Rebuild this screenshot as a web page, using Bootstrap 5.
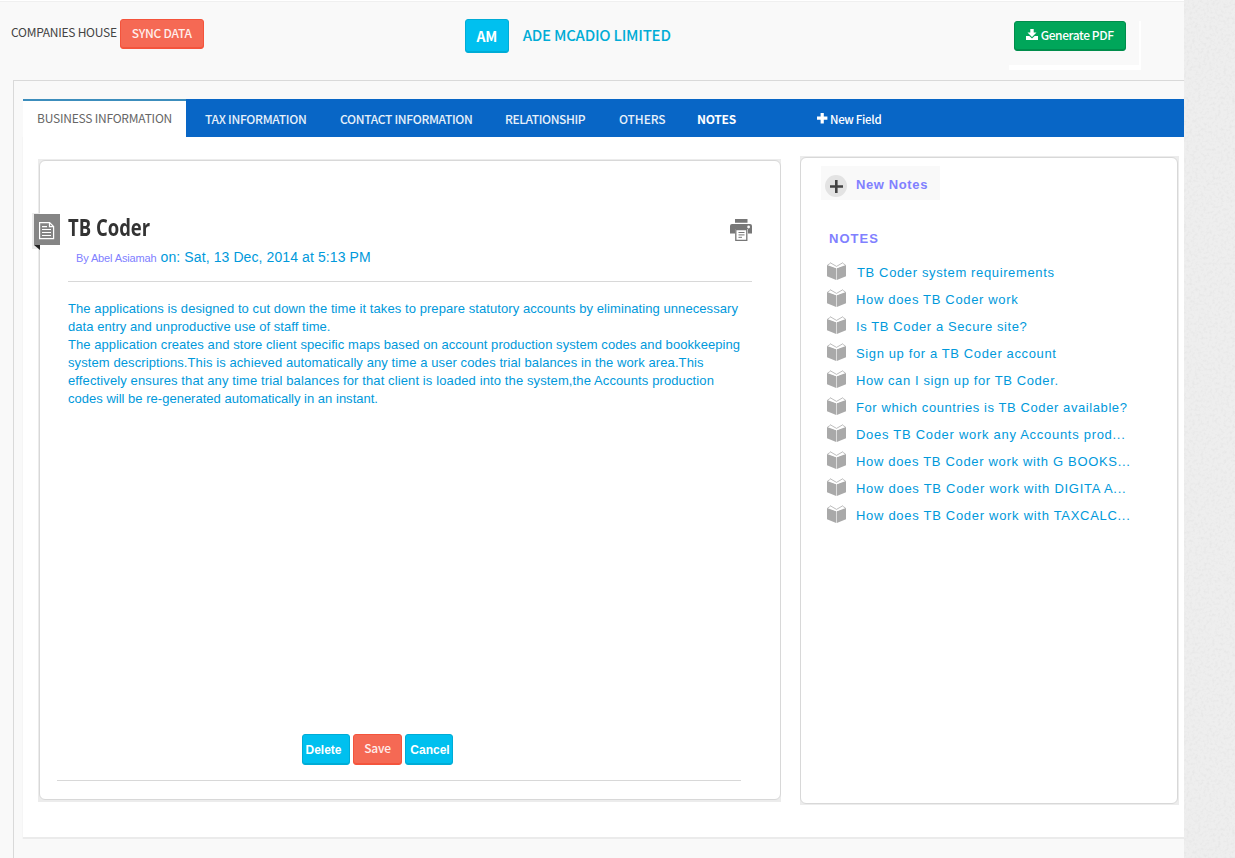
<!DOCTYPE html>
<html lang="en">
<head>
<meta charset="utf-8">
<title>Ade McAdio Limited</title>
<link rel="stylesheet" href="https://cdn.jsdelivr.net/npm/bootstrap@5.3.0/dist/css/bootstrap.min.css">
<style>
body{font-family:"Liberation Sans",Arial,sans-serif;background:#ededed;height:858px;overflow:hidden;font-size:13px;line-height:18px;color:#0099db}
.ssp{font-family:"Noto Sans CJK JP",sans-serif;font-size:12px;letter-spacing:-.26px;line-height:18px;white-space:nowrap}
.page-main{width:1184px;height:858px;background:#f9f9f9}
.grain{flex:1;height:858px}
.topbar{height:80px;border-top:1px solid #fff;box-shadow:inset 0 1px #f0f0f0;color:#444}
.action{border-radius:3px;padding:0;border:1px solid;display:flex;align-items:center;justify-content:center;color:#fff;flex:none}
.action:hover{color:#fff}
.coral{background:#f56954;border-color:#f4543c;box-shadow:inset 0 -1px #f4543c;color:#ffeeeb}
.aqua{background:#00c0ef;border-color:#00acd6;box-shadow:inset 0 -1px #00acd6}
.leaf{background:#00a65a;border-color:#008d4c;box-shadow:inset 0 -1px #008d4c}
.sync{width:84px;height:30px;margin:18px 0 0 3px;padding-bottom:2px}
.initials{width:44px;height:34px;margin:18px 0 0 261px;font-size:14px;font-weight:700}
.company{margin:25px 0 0 14px;font-size:15px;font-weight:500;letter-spacing:-.24px;color:#00acd6}
.pdfbox{width:132px;height:49px;margin:20px 0 0 338px;padding-left:5px;background:linear-gradient(#fff,#fff) right/2px 100% no-repeat,linear-gradient(#fff,#fff) bottom/100% 5px no-repeat}
.pdf{width:112px;height:30px;font-weight:500;letter-spacing:-.4px;padding-bottom:2px}
.frame{margin-left:13px;height:778px;border:solid #d9d9d9;border-width:1px 0 0 1px;padding:18px 0 0 9px}
.tabs{height:38px;background:#0866c6;color:#e6f0fa;font-weight:500;flex-wrap:nowrap}
.tabs .nav-item{padding-top:11px}
.tabs .current{width:163px;height:38px;background:#fff;border-top:2px solid #3c8dbc;color:#666;font-weight:400;padding:8px 0 0 14px;letter-spacing:-.22px}
.pane{height:702px;background:#fff;border-bottom:2px solid #ebebeb;box-shadow:-1px 0 #f5f5f5}
.shell{background:#ececec;position:relative}
.shell-main{width:743px;height:643px;margin:22px 0 0 15px;padding:1px 0 2px 1px}
.shell-side{width:379px;height:649px;margin:19px 0 0 19px;padding:1px 1px 1px 0}
.sheet{height:100%;background:#fff;border:1px solid #d8d8d8;border-radius:6px}
.marker{position:absolute;left:-6px;top:54px}
.head-row{margin:57px 28px 0 28px;height:64px;border-bottom:1px solid #d8d8d8}
.note-title{font:700 24px/26px "Open Sans",sans-serif;color:#333;transform:scaleX(.77);transform-origin:0 0;white-space:nowrap;margin:-4px 0 0}
.byline{margin:8px 0 0 8px;white-space:nowrap;font-size:14px;letter-spacing:.1px}
.author{font-size:11px;letter-spacing:-.13px}
.violet{color:#8080ff}
.story{margin:18px 0 0 28px;height:434px;white-space:nowrap}
.buttons{margin-left:262px;gap:3px}
.buttons .action{width:48px;height:31px;font-size:12px;font-weight:700}
.rule-end{width:684px;margin:15px 0 0 17px;border-top:1px solid #d8d8d8}
.new-note{width:119px;height:34px;margin:8px 0 0 20px;background:#f9f9f9;font-weight:700;letter-spacing:.615px}
.notes-head{font-size:13px;font-weight:700;letter-spacing:1.04px;margin:30px 0 0 28px;line-height:18px}
.note-list{margin:11px 0 0 26px;padding:0;list-style:none}
.note-list li{height:27px;display:flex;white-space:nowrap}
.note-list svg{margin:3px 10px 0 0;flex:none}
.note-list span{padding-top:5px;letter-spacing:.66px}
</style>
<script src="https://cdn.jsdelivr.net/npm/bootstrap@5.3.0/dist/js/bootstrap.bundle.min.js"></script>
</head>
<body class="d-flex">
<svg width="0" height="0" class="position-absolute"><symbol id="book" viewBox="0 0 19 18"><path fill="#a9a9a9" d="M0 3 9.200 6.200V18L0 14.300zM19 3 9.800 6.200V18l9.200-3.700z"/><path fill="none" stroke="#b5b5b5" stroke-width=".9" d="M.5 3 3.200 1.500M3 .6l6.500 3.800L16 .6M18.500 3 16 1.500"/><path fill="none" stroke="#fff" stroke-width=".8" d="M2.500 2.700l7 3.200 7-3.200"/></symbol></svg>
<main class="page-main flex-shrink-0">
  <header class="topbar d-flex align-items-start">
    <span class="ssp" style="margin:22px 0 0 11px">COMPANIES HOUSE</span>
    <button class="btn action coral sync ssp fw-medium" style="font-weight:500">SYNC DATA</button>
    <button class="btn action aqua initials ssp">AM</button>
    <span class="ssp company">ADE MCADIO LIMITED</span>
    <div class="pdfbox">
      <button class="btn action leaf ssp pdf">
        <svg width="12" height="12" viewBox="0 0 12 12" fill="#fff" style="margin:-1px 3px 0 0"><path d="M4.300 0h3.400v3.600h2.800L6 8 1.500 3.600h2.800z"/><path d="M0 7h3.300L6 9.500 8.700 7H12v4H0z"/></svg>Generate PDF</button>
    </div>
  </header>
  <section class="frame">
    <nav class="nav tabs ssp">
      <div class="nav-item current">BUSINESS INFORMATION</div>
      <div class="nav-item" style="width:135px;padding-left:19px;letter-spacing:-.28px">TAX INFORMATION</div>
      <div class="nav-item" style="width:165px;padding-left:19px;letter-spacing:-.31px">CONTACT INFORMATION</div>
      <div class="nav-item" style="width:114px;padding-left:19px;letter-spacing:-.4px">RELATIONSHIP</div>
      <div class="nav-item" style="width:79px;padding-left:19px;letter-spacing:-.1px">OTHERS</div>
      <div class="nav-item text-white" style="width:135px;padding-left:18px;font-weight:700">NOTES</div>
      <div class="nav-item text-white" style="padding-left:2px;font-size:11.5px;letter-spacing:-.3px"><svg width="11" height="11" viewBox="0 0 11 11" style="margin:-4px 2px 0 1px"><path d="M5.200 0v10.400M0 5.200h10.400" stroke="#fff" stroke-width="3.200"/></svg>New Field</div>
    </nav>
    <div class="pane d-flex align-items-start">
      <article class="shell shell-main">
        <div class="sheet">
          <div class="head-row d-flex justify-content-between">
            <div><h1 class="note-title">TB Coder</h1>
            <div class="byline"><span class="author violet">By Abel Asiamah</span> on: Sat, 13 Dec, 2014 at 5:13 PM</div></div>
            <svg width="22" height="22" viewBox="0 0 22 22" style="margin-top:1px;flex:none"><path fill="#777" d="M5 0h12.500v3.700H5zM2 5h18q2 0 2 2v7.500h-4V10H5v4.500H0V7q0-2 2-2z"/><circle cx="18.600" cy="8" r="1.400" fill="#fff"/><path fill="#fff" stroke="#777" stroke-width="1.300" d="M5.800 10.600h11v10.700h-11z"/><path stroke="#777" d="M8.500 13.500h6M8.500 15.900h6M8.500 18.300h3.500"/></svg>
          </div>
          <div class="story">
            <div style="letter-spacing:.077px">The applications is designed to cut down the time it takes to prepare statutory accounts by eliminating unnecessary</div>
            <div style="letter-spacing:.056px">data entry and unproductive use of staff time.</div>
            <div style="letter-spacing:.065px">The application creates and store client specific maps based on account production system codes and bookkeeping</div>
            <div style="letter-spacing:.09px">system descriptions.This is achieved automatically any time a user codes trial balances in the work area.This</div>
            <div style="letter-spacing:.116px">effectively ensures that any time trial balances for that client is loaded into the system,the Accounts production</div>
            <div style="letter-spacing:.013px">codes will be re-generated automatically in an instant.</div>
          </div>
          <div class="buttons d-flex">
            <button class="btn action aqua" style="padding-right:5px">Delete</button>
            <button class="btn action coral ssp" style="width:49px;font-weight:500;padding-bottom:3px">Save</button>
            <button class="btn action aqua" style="padding-left:2px">Cancel</button>
          </div>
          <div class="rule-end"></div>
        </div>
        <svg class="marker" width="28" height="37" viewBox="0 0 28 37"><path fill="#ececec" d="M0 0h8v36H0z"/><path fill="#858585" d="M2 1h26v31H2z"/><path fill="#222" d="M2 32h6v5z"/><path fill="none" stroke="#fff" stroke-width="1.200" d="M7.600 9.600h10l4 4v12H7.600zM17.500 9.600v4h4M10 13.600h5M10 16.500h9M10 19.500h9M10 22.500h9"/></svg>
      </article>
      <aside class="shell shell-side">
        <div class="sheet">
          <div class="new-note violet d-flex">
            <svg width="22" height="22" viewBox="0 0 22 22" style="margin:9px 9px 0 4px;flex:none"><circle cx="11" cy="11" r="11" fill="#e3e3e3"/><path d="M11.300 5v13M5 11.500h13" stroke="#444" stroke-width="2.600"/></svg>
            <span style="padding-top:10px">New Notes</span>
          </div>
          <h2 class="notes-head violet">NOTES</h2>
          <ul class="note-list">
            <li><svg width="19" height="18"><use href="#book"/></svg><span style="letter-spacing:.63px;padding-left:1px">TB Coder system requirements</span></li>
            <li><svg width="19" height="18"><use href="#book"/></svg><span>How does TB Coder work</span></li>
            <li><svg width="19" height="18"><use href="#book"/></svg><span style="letter-spacing:.6px">Is TB Coder a Secure site?</span></li>
            <li><svg width="19" height="18"><use href="#book"/></svg><span style="letter-spacing:.62px">Sign up for a TB Coder account</span></li>
            <li><svg width="19" height="18"><use href="#book"/></svg><span style="letter-spacing:.6px">How can I sign up for TB Coder.</span></li>
            <li><svg width="19" height="18"><use href="#book"/></svg><span style="letter-spacing:.586px">For which countries is TB Coder available?</span></li>
            <li><svg width="19" height="18"><use href="#book"/></svg><span style="letter-spacing:.71px">Does TB Coder work any Accounts prod...</span></li>
            <li><svg width="19" height="18"><use href="#book"/></svg><span style="letter-spacing:.671px">How does TB Coder work with G BOOKS...</span></li>
            <li><svg width="19" height="18"><use href="#book"/></svg><span style="letter-spacing:.72px">How does TB Coder work with DIGITA A...</span></li>
            <li><svg width="19" height="18"><use href="#book"/></svg><span style="letter-spacing:.702px">How does TB Coder work with TAXCALC...</span></li>
          </ul>
        </div>
      </aside>
    </div>
  </section>
</main>
<svg class="grain" preserveAspectRatio="none"><filter id="n" x="0" y="0" width="100%" height="100%"><feTurbulence type="fractalNoise" baseFrequency=".35" numOctaves="2"/><feColorMatrix values="0 0 0 0 .7  0 0 0 0 .7  0 0 0 0 .7  .9 0 0 0 -.4"/></filter><rect width="100%" height="100%" fill="#eee"/><rect width="100%" height="100%" filter="url(#n)"/></svg>
</body>
</html>
